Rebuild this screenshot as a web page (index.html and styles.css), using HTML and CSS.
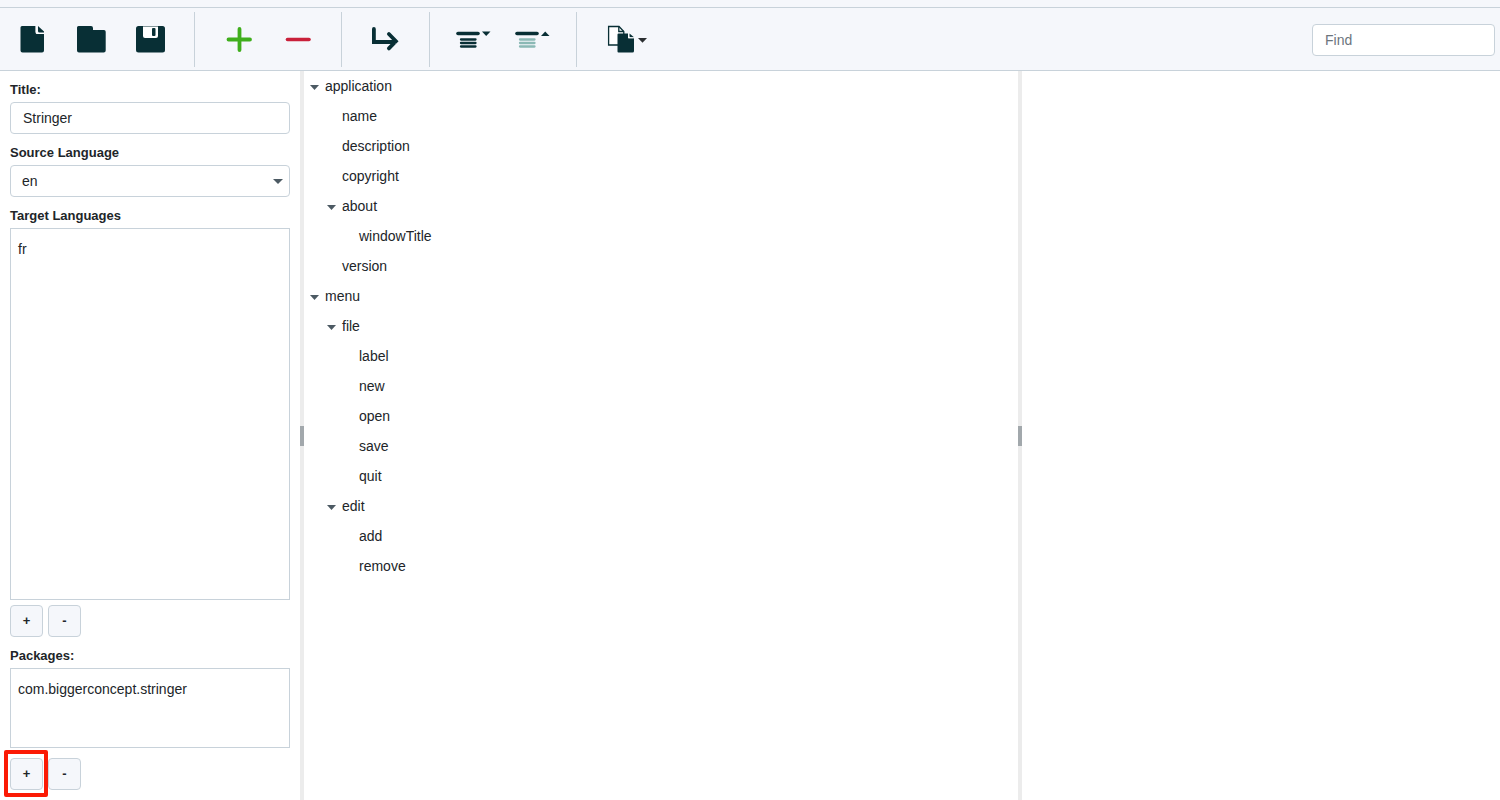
FILE: index.html
```html
<!DOCTYPE html>
<html lang="en">
<head>
<meta charset="utf-8">
<title>Stringer</title>
<link rel="stylesheet" href="styles.css">
</head>
<body>
<div class="app">
  <header class="toolbar">
    <div class="tools">
      <div class="group">
        <button class="tool" type="button" aria-label="New">
          <svg width="32" height="32" viewBox="1 1 32 32"><path class="ink" d="M6 3h14v7a1 1 0 0 0 1 1h7v16.500a2 2 0 0 1-2 2H6.500a2 2 0 0 1-2-2V4.500A1.500 1.500 0 0 1 6 3z"/><path class="ink" d="M22 3l6 5.500V9.500h-4.500A1.500 1.500 0 0 1 22 8z"/><path d="M20 3v6a1.500 1.500 0 0 0 1.500 1.500H28" fill="none" stroke="#fff" stroke-width="1.200"/></svg>
        </button>
        <button class="tool" type="button" aria-label="Open">
          <svg width="32" height="32" viewBox="1 1 32 32"><path class="ink" d="M3.500 3H16a2 2 0 0 1 2 2v2h11a1.700 1.700 0 0 1 1.700 1.700V27.500a2 2 0 0 1-2 2H4a2 2 0 0 1-2-2V4.500A1.500 1.500 0 0 1 3.500 3z"/></svg>
        </button>
        <button class="tool" type="button" aria-label="Save">
          <svg width="32" height="32" viewBox="1 1 32 32"><rect class="ink" x="2" y="3" width="29" height="26.500" rx="2.500"/><path fill="#fff" d="M9 3.400h15v9.500a2 2 0 0 1-2 2H11a2 2 0 0 1-2-2z"/><rect class="ink" x="18" y="5" width="3.500" height="8" rx="1"/></svg>
        </button>
      </div>
      <div class="group">
        <button class="tool" type="button" aria-label="Add">
          <svg width="32" height="32" viewBox="0 1 32 32"><path d="M5.500 16.500H27M16.500 6V27" stroke="#3fae1c" stroke-width="3.800" stroke-linecap="round"/></svg>
        </button>
        <button class="tool" type="button" aria-label="Remove">
          <svg width="32" height="32" viewBox="0 1 32 32"><path d="M5.500 16.500H27" stroke="#c9203a" stroke-width="3.600" stroke-linecap="round"/></svg>
        </button>
      </div>
      <div class="group">
        <button class="tool" type="button" aria-label="Move">
          <svg width="32" height="32" viewBox="1 1 32 32"><path d="M4.900 6v13H26M19.900 11l7 7.200-7 7.200" fill="none" stroke="#082f35" stroke-width="3.800" stroke-linecap="round" stroke-linejoin="miter"/></svg>
        </button>
      </div>
      <div class="group">
        <button class="tool" type="button" aria-label="Expand all">
          <svg width="36" height="32" viewBox="1 0 36 32"><path d="M3 9.500H23" stroke="#082f35" stroke-width="3.600" stroke-linecap="round"/><path d="M6 15.500H20.500M6 19H20.500M6 22.500H20.500" stroke="#082f35" stroke-width="2.300" stroke-linecap="round"/><path class="ink" d="M27 7.500h8.500L31.200 12z"/></svg>
        </button>
        <button class="tool" type="button" aria-label="Collapse all">
          <svg width="36" height="32" viewBox="1 0 36 32"><path d="M3 9.500H23" stroke="#082f35" stroke-width="3.600" stroke-linecap="round"/><path d="M6 15.500H20.500M6 19H20.500M6 22.500H20.500" stroke="#8bb9b5" stroke-width="2.300" stroke-linecap="round"/><path class="ink" d="M27 12h8.500L31.200 7.500z"/></svg>
        </button>
      </div>
      <div class="group">
        <button class="tool wide" type="button" aria-label="Copy" aria-haspopup="menu">
          <svg width="42" height="32" viewBox="0 1 42 32"><path d="M2.600 3.500h10.400l4.800 5V22H2.600z" fill="#fff" stroke="#082f35" stroke-width="1.300"/><path d="M12.800 3.500V8.500h5" fill="none" stroke="#082f35" stroke-width="1.300"/><path class="ink" d="M12.500 10.500h9.500V15.200h6V28a1.500 1.500 0 0 1-1.500 1.500h-14a1 1 0 0 1-1-1v-17a1 1 0 0 1 1-1z"/><path class="ink" d="M23.500 10.500l4.500 3.800h-3.500a1 1 0 0 1-1-1z"/><path d="M22.600 10.500V14.800h5.200" fill="none" stroke="#fff" stroke-width=".8"/><path d="M32 15h9L36.500 19.700z" fill="#2b2f31"/></svg>
        </button>
      </div>
    </div>
    <input class="field find" type="search" placeholder="Find" aria-label="Find">
  </header>

  <main class="panes">
    <section class="sidebar">
      <label class="label" for="title">Title:</label>
      <input class="field" id="title" type="text" value="Stringer">
      <label class="label" for="source">Source Language</label>
      <div class="select">
        <select class="field" id="source"><option>en</option></select>
      </div>
      <h2 class="label" id="targets">Target Languages</h2>
      <ul class="list grow" aria-labelledby="targets"><li>fr</li></ul>
      <div class="actions">
        <button class="btn" type="button" aria-label="Add language">+</button>
        <button class="btn" type="button" aria-label="Remove language">-</button>
      </div>
      <h2 class="label" id="packages">Packages:</h2>
      <ul class="list short" aria-labelledby="packages"><li>com.biggerconcept.stringer</li></ul>
      <div class="actions last">
        <div class="marked"><button class="btn" type="button" aria-label="Add package">+</button></div>
        <button class="btn" type="button" aria-label="Remove package">-</button>
      </div>
    </section>
    <div class="splitter"></div>
    <section class="center">
      <ul class="tree">
        <li><div class="row"><button class="toggle" type="button" aria-label="Collapse application"></button>application</div>
          <ul>
            <li><div class="row leaf">name</div></li>
            <li><div class="row leaf">description</div></li>
            <li><div class="row leaf">copyright</div></li>
            <li><div class="row"><button class="toggle" type="button" aria-label="Collapse about"></button>about</div>
              <ul><li><div class="row leaf">windowTitle</div></li></ul>
            </li>
            <li><div class="row leaf">version</div></li>
          </ul>
        </li>
        <li><div class="row"><button class="toggle" type="button" aria-label="Collapse menu"></button>menu</div>
          <ul>
            <li><div class="row"><button class="toggle" type="button" aria-label="Collapse file"></button>file</div>
              <ul>
                <li><div class="row leaf">label</div></li>
                <li><div class="row leaf">new</div></li>
                <li><div class="row leaf">open</div></li>
                <li><div class="row leaf">save</div></li>
                <li><div class="row leaf">quit</div></li>
              </ul>
            </li>
            <li><div class="row"><button class="toggle" type="button" aria-label="Collapse edit"></button>edit</div>
              <ul>
                <li><div class="row leaf">add</div></li>
                <li><div class="row leaf">remove</div></li>
              </ul>
            </li>
          </ul>
        </li>
      </ul>
    </section>
    <div class="splitter"></div>
    <section class="detail"></section>
  </main>
</div>
</body>
</html>
```
FILE: styles.css
```css
*, *::before, *::after { box-sizing: border-box; }
body {
  margin: 0;
  font: 14px/20px "Liberation Sans", Arial, sans-serif;
  color: #212529;
  background: #fff;
}
ul { list-style: none; margin: 0; padding: 0; }
button, input, select { font: inherit; color: inherit; margin: 0; }

.app { display: flex; flex-direction: column; min-height: 100vh; }
.app::before {
  content: "";
  height: 8px;
  background: #f5f7fb;
  border-bottom: 1px solid #c8d2da;
}

.toolbar {
  display: flex;
  align-items: center;
  justify-content: space-between;
  padding: 4px 5px 3px 0;
  background: #f5f7fb;
  border-bottom: 1px solid #c8d2da;
}
.tools { display: flex; }
.group { display: flex; height: 55px; padding: 0 14px; }
.group:first-child { padding-left: 3px; }
.group + .group { border-left: 1px solid #c8d2da; }
.tool {
  display: flex;
  align-items: center;
  justify-content: center;
  width: 59px;
  padding: 0;
  border: 0;
  background: none;
}
.tool.wide { width: 72px; }
.ink { fill: #082f35; }

.field {
  width: 100%;
  height: 32px;
  padding: 0 12px;
  border: 1px solid #c8d2da;
  border-radius: 4px;
  background: #fff;
}
.find { width: 183px; appearance: none; }
.find::placeholder { color: #6c757d; opacity: 1; }

.panes { display: flex; flex: 1; }
.sidebar {
  display: flex;
  flex-direction: column;
  width: 300px;
  padding: 0 10px 10px;
}
.label {
  margin: 10px 0 3px;
  font-size: 13px;
  line-height: 18px;
  font-weight: bold;
}
.select { position: relative; }
.select .field { appearance: none; padding: 0 11px; }
.select::after {
  content: "";
  position: absolute;
  top: 14px;
  right: 7px;
  width: 10px;
  height: 5px;
  background: #4c5a63;
  clip-path: polygon(0 0, 100% 0, 50% 100%);
  pointer-events: none;
}
.list { padding: 5px 7px; border: 1px solid #c8d2da; line-height: 30px; }
.grow { flex: 1; }
.short { min-height: 80px; }
.actions { display: flex; gap: 5px; margin-top: 5px; }
.actions.last { margin-top: 10px; }
.btn {
  display: block;
  width: 33px;
  height: 32px;
  padding: 0;
  border: 1px solid #c8d2da;
  border-radius: 4px;
  background: #f5f7fb;
  font-size: 13px;
  font-weight: bold;
}
.marked { position: relative; }
.marked::after {
  content: "";
  position: absolute;
  inset: -8px -5px -7px -6px;
  border: 4px solid #fb1a05;
  border-radius: 2px;
  pointer-events: none;
}

.splitter {
  display: flex;
  align-items: center;
  width: 4px;
  background: #ececec;
}
.splitter::before { content: ""; width: 4px; height: 20px; background: #a2a8ac; }
.center { flex: 708 1 0; padding-left: 6px; }
.detail { flex: 478 1 0; }

.tree ul { padding-left: 17px; }
.row { display: flex; align-items: center; gap: 6px; height: 30px; }
.leaf { padding-left: 15px; }
.toggle {
  width: 9px;
  height: 5px;
  margin-top: 3px;
  padding: 0;
  border: 0;
  background: #4c5a63;
  clip-path: polygon(0 0, 100% 0, 50% 100%);
}
```
